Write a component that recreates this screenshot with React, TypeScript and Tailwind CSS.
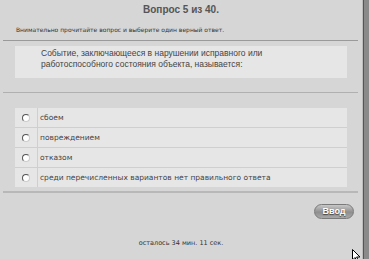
import React from 'react'

const options = [
  'сбоем',
  'повреждением',
  'отказом',
  'среди перечисленных вариантов нет правильного ответа',
]

function Radio() {
  return (
    <span className="block w-[8px] h-[8px] rounded-full bg-white border border-t-[#555] border-l-[#555] border-r-[#ccc] border-b-[#ccc]" />
  )
}

export default function App() {
  return (
    <div
      className="w-[369px] h-[259px] flex bg-[#d6d6d6] overflow-hidden relative"
      style={{ fontFamily: '"DejaVu Sans", Verdana, sans-serif' }}
    >
      <div className="flex-1 flex flex-col">
        {/* Title */}
        <div
          className="h-[22px] pt-[3px] text-center text-[10px] font-bold text-[#555] leading-[14px]"
          style={{ fontFamily: '"Liberation Sans", Arial, sans-serif' }}
        >
          Вопрос 5 из 40.
        </div>

        <div className="h-[18px] pl-[16px] pt-[4px] text-[6px] leading-[8px] text-[#333] whitespace-nowrap">
          Внимательно прочитайте вопрос и выберите один верный ответ.
        </div>

        <div className="h-px ml-[3px] mr-[4px] bg-[#9a9a9a]" />

        {/* Question */}
        <div
          className="mt-[5px] mx-[15px] h-[32px] bg-[#e6e6e6] pl-[26px] pt-[2px] text-[8.5px] leading-[11px] text-[#444]"
          style={{ fontFamily: '"Liberation Sans", Arial, sans-serif' }}
        >
          Событие, заключающееся в нарушении исправного или
          <br />
          работоспособного состояния объекта, называется:
        </div>

        <div className="h-px mt-[14px] ml-[3px] mr-[4px] bg-[#b0b0b0]" />

        {/* Options */}
        <div className="mt-[15px] mx-[15px] flex flex-col gap-px bg-[#cfcfcf]">
          {options.map((o, i) => (
            <div key={i} className="flex h-[19px] gap-px">
              <div className="w-[22px] bg-[#e6e6e6] flex items-center justify-center">
                <Radio />
              </div>
              <div className="flex-1 bg-[#e6e6e6] flex items-center pl-[2px] text-[7.5px] text-[#444] whitespace-nowrap">
                {o}
              </div>
            </div>
          ))}
        </div>

        <div className="h-[2px] mt-[4px] ml-[3px] mr-[4px] bg-[#b8b8b8]" />

        {/* Button */}
        <div className="mt-[11px] flex justify-end pr-[8px]">
          <button
            className="w-[40px] h-[15px] rounded-full border border-[#7a7a7a] text-[9px] font-bold text-white leading-none flex items-center justify-center"
            style={{
              background: 'linear-gradient(#c8c8c8, #8e8e8e 55%, #a8a8a8)',
              textShadow: '0 1px 1px #444',
              fontFamily: '"Liberation Sans", Arial, sans-serif',
            }}
          >
            Ввод
          </button>
        </div>

        <div className="mt-[20px] text-center text-[6.5px] text-[#333] whitespace-nowrap">
          осталось 34 мин. 11 сек.
        </div>
      </div>

      {/* right scrollbar strip */}
      <div className="w-[7px] flex">
        <div className="w-px bg-[#bdbdbd]" />
        <div className="w-px bg-[#555]" />
        <div className="flex-1 bg-[#8a8a8a]" />
      </div>

      {/* cursor */}
      <svg className="absolute left-[352px] top-[249px]" width="9" height="13" viewBox="0 0 9 13">
        <path d="M0.5 0.5 L0.5 11 L3 8.5 L5 12.5 L6.5 11.8 L4.6 8 L8 8 Z" fill="#fff" stroke="#000" strokeWidth="1" />
      </svg>
    </div>
  )
}
